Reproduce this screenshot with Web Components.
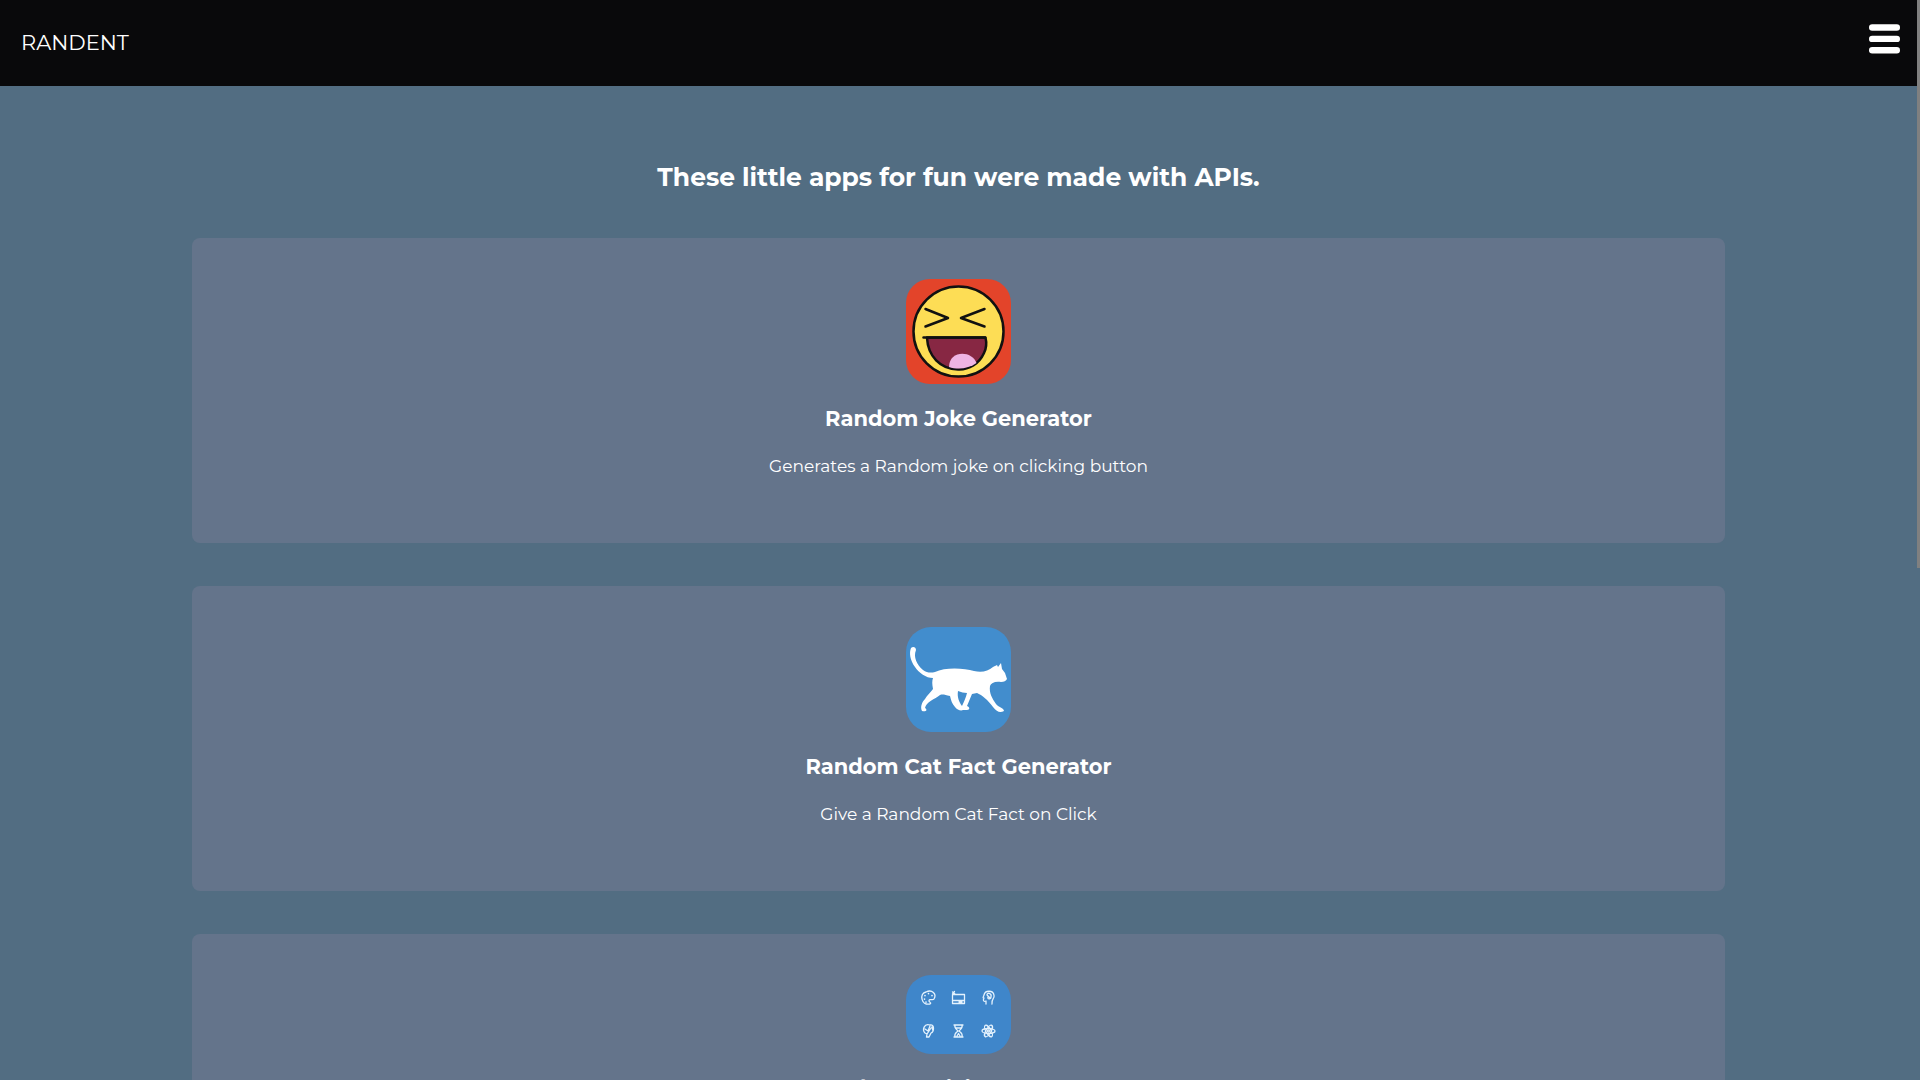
<!DOCTYPE html>
<html lang="en">
<head>
<meta charset="utf-8">
<title>Randent</title>
<style>
html{height:100%;overflow:hidden}
body{margin:0;height:100%;background:#526d82;color:#fff;font-family:Montserrat,Inter,"Liberation Sans",sans-serif}
</style>
</head>
<body>
<randent-page></randent-page>
<script>
const define = (name, html) => customElements.define(name, class extends HTMLElement {
  constructor() {
    super();
    this.attachShadow({mode: 'open'}).innerHTML = html;
  }
});

define('site-header', `
<style>
:host{display:block}
header{display:flex;justify-content:space-between;align-items:center;height:86px;padding:0 17px 0 21px;background:#09090b;box-sizing:border-box}
a{color:#fff;text-decoration:none;font-size:21px;line-height:28px}
button{display:block;border:0;background:none;padding:0;margin-bottom:8px;width:31px;height:30px;cursor:pointer}
svg{display:block}
</style>
<header>
<a href="#"><slot></slot></a>
<button type="button" aria-label="Menu"><svg width="31" height="30" viewBox="0 0 31 30" fill="#fff"><rect y=".3" width="31" height="6.400" rx="3.2"/><rect y="11.7" width="31" height="6.400" rx="3.2"/><rect y="23.1" width="31" height="6.400" rx="3.2"/></svg></button>
</header>`);

define('app-card', `
<style>
:host{display:block}
article{display:flex;flex-direction:column;align-items:center;box-sizing:border-box;min-height:305px;padding:41px 20px;border-radius:8px;background:#64748b;text-align:center}
h2{margin:21px 0 0;font-size:21px;line-height:28px;font-weight:700}
p{margin:21px 0 0;font-size:17px;line-height:24px;color:#fff}
</style>
<article><slot name="icon"></slot><h2><slot name="title"></slot></h2><p><slot></slot></p></article>`);

define('joke-icon', `
<style>:host{display:block}svg{display:block}</style>
<svg width="105" height="105" viewBox="0 0 105 105">
<rect width="105" height="105" rx="24" fill="#e3442a"/>
<g stroke="#111" stroke-width="2.5" stroke-linecap="round" stroke-linejoin="round">
<circle cx="52.500" cy="52.500" r="45" fill="#fddd55"/>
<path d="M19.500 30L42 39L19.500 47.500M78.500 30L55 39L78.500 47.500" fill="none"/>
<path d="M21 58.500H79.500Q81.500 67 78 74C73 85 63 91 52 90.500C34 90 22 77 21 59Z" fill="#872743"/>
<path d="M17.500 58.500H79" fill="none"/></g>
<path d="M43 88C43 71 66 71 70.500 84C63 89.500 52 91 43 88Z" fill="#efb4e4"/>
</svg>`);

define('cat-icon', `
<style>:host{display:block}svg{display:block}</style>
<svg width="105" height="105" viewBox="0 0 105 105">
<rect width="105" height="105" rx="25" fill="#428dcd"/>
<path fill="#fff" d="M5 21C7 19 10 20 10 23C7 30 11 38 17 43C21 46 25 46 29 45C39 40 58 41 68 44C76 46 82 44 87 40C88 39 90 39 91 38L92 40L95 36L96 42L99 46L100 49L101 52C100 54 98 55 95 55C89 54 85 56 84 59C83 66 86 71 90 77C92 80 98 81 98 84C94 86 91 85 87 80C82 73 76 68 71 66L66 67L61 79C64 80 64 83 61 83H57C55 84 51 83 49 80C46 77 45 73 44 69C39 68 37 67 34 68C29 72 20 75 19 81C22 83 20 85 16 84C14 80 16 75 19 72C21 68 25 65 27 62C26 57 26 54 27 51C20 51 13 46 9 40C4 33 3 26 5 21ZM52 64C51 70 53 75 56 79C58 75 60 70 61 66C58 66 55 65 52 64Z"/>
</svg>`);

define('activity-icon', `
<style>:host{display:block}svg{display:block}</style>
<svg width="105" height="79" viewBox="0 0 105 79">
<rect width="105" height="79" rx="25" fill="#3f86ca"/>
<g fill="none" stroke="#e4f2fd" stroke-width="1.3" stroke-linecap="round" stroke-linejoin="round">
<path d="M24 29C15 31 13 18 20 17C26 14 31 19 28 24C27 26 23 23 23 26C23 27 26 28 24 29Z"/>
<g stroke-width="1.7"><path d="M18.500 24V24.100M19 20.500V20.600M22.500 18.500V18.600M26 20.500V20.600M20 27V27.100"/></g>
<path d="M46.500 19.500H58.500V28.500H46.500ZM46.500 25.500H58.500M46.500 19L48.500 16.500M49 19L46.500 17M53 27H56"/>
<path d="M80 29V26C77 27 77 25 78 23C76 23 78 21 78 20C79 15 87 15 88 20C89 24 85 24 86 29M81 20L84 23M81 20C81 17 86 18 85 22C85 25 81 24 82 22"/>
<path d="M21 59L20.500 62H23L25 58C28 57 29 49 24 50C18 48 16 55 19 58L21 59L25 53M19 54L22 56L24 51M26 52L27 56"/>
<path d="M48 50H57M48 62H57M49 50C48 54 51 54 52 56C50 58 48 58 49 62M56 50C57 54 54 54 53 56C55 58 57 58 56 62M50 53H55M51 61L52.500 58.500L54 61"/>
<g transform="translate(82.500 56)"><ellipse rx="6.500" ry="2.500"/><ellipse rx="6.500" ry="2.500" transform="rotate(60)"/><ellipse rx="6.500" ry="2.500" transform="rotate(120)"/><circle r="1"/></g>
</g>
</svg>`);

define('randent-page', `
<style>
:host{display:flex;height:100%}
.view{flex:1;min-width:0;overflow:hidden}
.bar{width:3px;height:568px;background:#808080}
main{padding:75px 10% 42px}
h1{margin:0 0 45px;text-align:center;font-size:25px;line-height:32px;font-weight:700}
.list{display:flex;flex-direction:column;gap:43px}
</style>
<div class="view">
<site-header>RANDENT</site-header>
<main>
<h1>These little apps for fun were made with APIs.</h1>
<div class="list">
<app-card><joke-icon slot="icon"></joke-icon><span slot="title">Random Joke Generator</span>Generates a Random joke on clicking button</app-card>
<app-card><cat-icon slot="icon"></cat-icon><span slot="title">Random Cat Fact Generator</span>Give a Random Cat Fact on Click</app-card>
<app-card><activity-icon slot="icon"></activity-icon><span slot="title">Random Activity Generator</span>Gives a Random Activity on Click</app-card>
</div>
</main>
</div>
<div class="bar"></div>`);
</script>
</body>
</html>
